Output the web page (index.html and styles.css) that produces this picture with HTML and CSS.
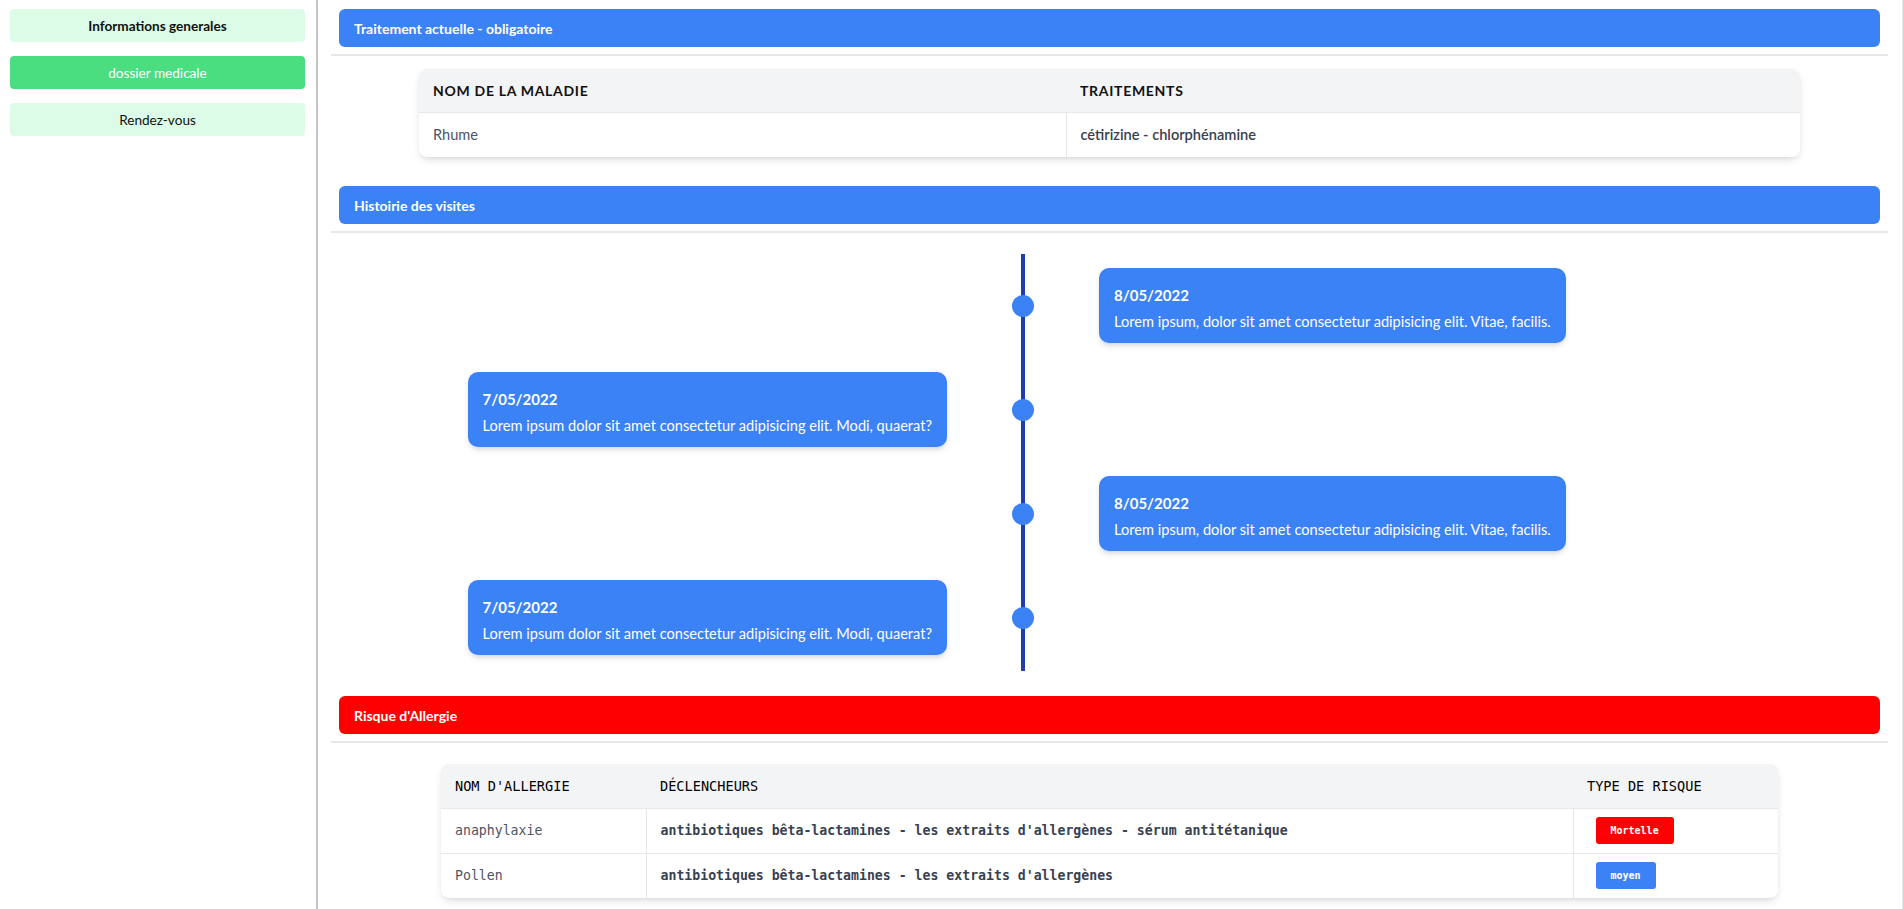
FILE: index.html
```html
<!DOCTYPE html>
<html lang="fr">
<head>
<meta charset="utf-8">
<title>Dossier medicale</title>
<link rel="stylesheet" href="styles.css">
</head>
<body>
<div class="app">
  <aside class="sidebar">
    <a class="nav-btn nav-strong">Informations generales</a>
    <a class="nav-btn nav-active">dossier medicale</a>
    <a class="nav-btn">Rendez-vous</a>
  </aside>
  <main class="main">
    <section class="section">
      <div class="bar bar-blue">Traitement actuelle - obligatoire</div>
      <div class="divider"></div>
      <div class="table-wrap table-wrap-1">
        <table class="tbl tbl-sans">
          <thead>
            <tr><th class="col-maladie">Nom de la maladie</th><th>Traitements</th></tr>
          </thead>
          <tbody>
            <tr><td class="cell-muted">Rhume</td><td class="cell-strong">cétirizine - chlorphénamine</td></tr>
          </tbody>
        </table>
      </div>
    </section>

    <section class="section section-visits">
      <div class="bar bar-blue">Histoirie des visites</div>
      <div class="divider"></div>
      <div class="timeline">
        <div class="tl-row">
          <div class="tl-left"></div>
          <div class="tl-dot"></div>
          <div class="tl-right">
            <div class="tl-card"><div class="tl-date">8/05/2022</div><div class="tl-text">Lorem ipsum, dolor sit amet consectetur adipisicing elit. Vitae, facilis.</div></div>
          </div>
        </div>
        <div class="tl-row">
          <div class="tl-left">
            <div class="tl-card"><div class="tl-date">7/05/2022</div><div class="tl-text">Lorem ipsum dolor sit amet consectetur adipisicing elit. Modi, quaerat?</div></div>
          </div>
          <div class="tl-dot"></div>
          <div class="tl-right"></div>
        </div>
        <div class="tl-row">
          <div class="tl-left"></div>
          <div class="tl-dot"></div>
          <div class="tl-right">
            <div class="tl-card"><div class="tl-date">8/05/2022</div><div class="tl-text">Lorem ipsum, dolor sit amet consectetur adipisicing elit. Vitae, facilis.</div></div>
          </div>
        </div>
        <div class="tl-row">
          <div class="tl-left">
            <div class="tl-card"><div class="tl-date">7/05/2022</div><div class="tl-text">Lorem ipsum dolor sit amet consectetur adipisicing elit. Modi, quaerat?</div></div>
          </div>
          <div class="tl-dot"></div>
          <div class="tl-right"></div>
        </div>
      </div>
    </section>

    <section class="section section-allergy">
      <div class="bar bar-red">Risque d'Allergie</div>
      <div class="divider"></div>
      <div class="table-wrap table-wrap-2">
        <table class="tbl tbl-mono">
          <thead>
            <tr><th class="col-nom">Nom d'allergie</th><th>Déclencheurs</th><th class="col-type">Type de risque</th></tr>
          </thead>
          <tbody>
            <tr><td class="cell-muted">anaphylaxie</td><td class="cell-strong">antibiotiques bêta-lactamines - les extraits d'allergènes - sérum antitétanique</td><td><span class="badge badge-red">Mortelle</span></td></tr>
            <tr><td class="cell-muted">Pollen</td><td class="cell-strong">antibiotiques bêta-lactamines - les extraits d'allergènes</td><td><span class="badge badge-blue">moyen</span></td></tr>
          </tbody>
        </table>
      </div>
    </section>
  </main>
</div>
</body>
</html>
```

FILE: styles.css
```css
* { box-sizing: border-box; }

html, body {
  margin: 0;
  padding: 0;
  background: #ffffff;
  font-family: Lato, "Open Sans", Arial, sans-serif;
  color: #111827;
}

.app {
  display: flex;
  min-height: 909px;
}

.sidebar {
  width: 318px;
  flex: 0 0 318px;
  padding: 9px 11px 0 10px;
  border-right: 2px solid #c6c6c6;
  display: flex;
  flex-direction: column;
  gap: 14px;
}

.nav-btn {
  display: flex;
  align-items: center;
  justify-content: center;
  height: 33px;
  border-radius: 4px;
  background: #dcfce7;
  color: #111111;
  font-size: 13.6px;
  cursor: pointer;
}

.nav-strong { font-weight: 700; }

.nav-active {
  background: #4ade80;
  color: #ffffff;
}

.main {
  flex: 1;
  padding: 9px 14px 0 13px;
  border-right: 1px solid #e5e7eb;
}

.section { display: flex; flex-direction: column; }

.bar {
  margin: 0 8px;
  height: 38px;
  border-radius: 6px;
  padding: 0 15px;
  display: flex;
  align-items: center;
  color: #ffffff;
  font-weight: 700;
  font-size: 14px;
}

.bar-blue { background: #3b82f6; }
.bar-red { background: #ff0000; }

.divider {
  height: 2px;
  background: #e5e7eb;
  margin-top: 7px;
}

.table-wrap {
  align-self: center;
  border-radius: 8px;
  overflow: hidden;
  box-shadow: 0 4px 10px -2px rgba(0,0,0,0.14), 0 2px 4px -2px rgba(0,0,0,0.08);
  background: #fff;
}

.table-wrap-1 { width: 1381px; margin-top: 13px; }
.table-wrap-2 { width: 1337px; margin-top: 21px; }

.tbl {
  width: 100%;
  border-collapse: collapse;
}

.tbl th {
  background: #f3f4f6;
  text-align: left;
  text-transform: uppercase;
  height: 43px;
  padding: 0 14px;
  color: #111111;
  border-bottom: 1px solid #e5e7eb;
}

.tbl td {
  height: 44px;
  padding: 0 14px;
  border-top: 1px solid #e5e7eb;
  border-left: 1px solid #e5e7eb;
}

.tbl td:first-child { border-left: none; }
.tbl tbody tr:first-child td { border-top: none; }

.tbl-sans th {
  font-size: 14px;
  font-weight: 700;
  letter-spacing: 0.05em;
}

.tbl-sans td { font-size: 14.6px; height: 45px; }

.col-maladie { width: 647px; }

.tbl-mono {
  font-family: "DejaVu Sans Mono", "Liberation Mono", monospace;
}

.tbl-mono th {
  font-size: 13.6px;
  font-weight: 400;
  color: #000000;
  height: 44px;
}

.tbl-mono td { font-size: 13.2px; height: 45px; }

.col-nom { width: 205px; }
.col-type { width: 205px; }

.cell-muted { color: #4b5563; }
.cell-strong { color: #374151; font-weight: 600; }

.badge {
  display: inline-block;
  margin-left: 8px;
  padding: 7px 15px;
  line-height: 13px;
  font-size: 10px;
  font-weight: 600;
  border-radius: 3px;
  color: #ffffff;
}

.badge-red { background: #ff0000; }
.badge-blue { background: #3b82f6; }

.timeline {
  width: 1384px;
  margin-top: 21px;
  padding: 14px 0 16px;
  display: flex;
  flex-direction: column;
  gap: 29px;
  background: linear-gradient(#1e40af, #1e40af) no-repeat center / 4px 100%;
}

.tl-row {
  display: grid;
  grid-template-columns: 1fr 22px 1fr;
  align-items: center;
}

.tl-left { display: flex; justify-content: flex-end; padding-right: 65px; }
.tl-right { display: flex; justify-content: flex-start; padding-left: 65px; }

.tl-dot {
  width: 22px;
  height: 22px;
  border-radius: 50%;
  background: #3b82f6;
}

.tl-card {
  background: #3b82f6;
  color: #ffffff;
  border-radius: 10px;
  padding: 15px 15px 11px;
  box-shadow: 0 4px 6px -1px rgba(0,0,0,0.12), 0 2px 4px -2px rgba(0,0,0,0.1);
  white-space: nowrap;
}

.tl-date {
  font-size: 15px;
  font-weight: 700;
  line-height: 24px;
}

.tl-text {
  margin-top: 4px;
  font-size: 14.6px;
  line-height: 21px;
}

.section-visits { margin-top: 29px; }
.section-allergy { margin-top: 25px; }
```
